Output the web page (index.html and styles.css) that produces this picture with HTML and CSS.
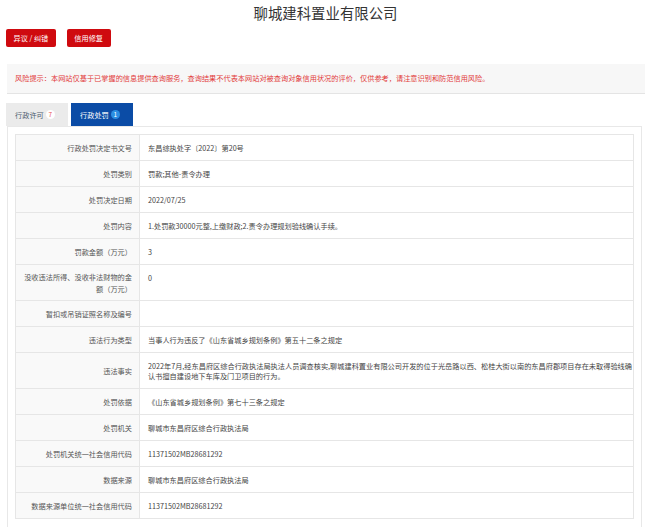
FILE: index.html
```html
<!DOCTYPE html>
<html lang="zh-CN">
<head>
<meta charset="utf-8">
<title>聊城建科置业有限公司</title>
<link rel="stylesheet" href="styles.css">
</head>
<body>
<div class="page">
  <h1 class="title">聊城建科置业有限公司</h1>
  <div class="actions">
    <a class="btn" href="#">异议 / 纠错</a>
    <a class="btn" href="#">信用修复</a>
  </div>
  <div class="risk">风险提示：本网站仅基于已掌握的信息提供查询服务，查询结果不代表本网站对被查询对象信用状况的评价，仅供参考，请注意识别和防范信用风险。</div>
  <div class="tabs">
    <div class="tab">行政许可<span class="badge badge-light">7</span></div>
    <div class="tab tab-active">行政处罚<span class="badge badge-blue">1</span></div>
  </div>
  <div class="panel">
    <table class="info">
      <tr><th>行政处罚决定书文号</th><td>东昌综执处字〔2022〕第20号</td></tr>
      <tr><th>处罚类别</th><td>罚款;其他-责令办理</td></tr>
      <tr><th>处罚决定日期</th><td>2022/07/25</td></tr>
      <tr><th>处罚内容</th><td>1.处罚款30000元整,上缴财政;2.责令办理规划验线确认手续。</td></tr>
      <tr><th>罚款金额（万元）</th><td>3</td></tr>
      <tr><th>没收违法所得、没收非法财物的金额（万元）</th><td>0</td></tr>
      <tr><th>暂扣或吊销证照名称及编号</th><td></td></tr>
      <tr><th>违法行为类型</th><td>当事人行为违反了《山东省城乡规划条例》第五十二条之规定</td></tr>
      <tr><th>违法事实</th><td>2022年7月,经东昌府区综合行政执法局执法人员调查核实,聊城建科置业有限公司开发的位于光岳路以西、松桂大街以南的东昌府郡项目存在未取得验线确认书擅自建设地下车库及门卫项目的行为。</td></tr>
      <tr><th>处罚依据</th><td>《山东省城乡规划条例》第七十三条之规定</td></tr>
      <tr><th>处罚机关</th><td>聊城市东昌府区综合行政执法局</td></tr>
      <tr><th>处罚机关统一社会信用代码</th><td>11371502MB28681292</td></tr>
      <tr><th>数据来源</th><td>聊城市东昌府区综合行政执法局</td></tr>
      <tr><th>数据来源单位统一社会信用代码</th><td>11371502MB28681292</td></tr>
    </table>
  </div>
</div>
</body>
</html>
```
FILE: styles.css
```css
html, body {
  margin: 0;
  padding: 0;
  background: #ffffff;
}
body {
  font-family: "Noto Sans CJK SC", "Noto Sans", "Liberation Sans", sans-serif;
  font-size: 7.2px;
  color: #333333;
}
.page {
  padding: 0 5px 0 6px;
}
.title {
  margin: 0;
  font-size: 14.4px;
  font-weight: normal;
  line-height: 26px;
  text-align: center;
  color: #333333;
}
.actions {
  display: flex;
  gap: 11px;
  margin-top: 3px;
}
.btn {
  display: flex;
  align-items: center;
  height: 18px;
  padding: 0 7.5px;
  background: #cf0a0f;
  color: #ffffff;
  border-radius: 2px;
  text-decoration: none;
  font-size: 7.2px;
}
.risk {
  margin: 17px 0 0 1px;
  height: 29px;
  line-height: 29px;
  padding-left: 8px;
  background: #f7f7f7;
  border-bottom: 1px solid #e4e4e4;
  color: #e23a3a;
  white-space: nowrap;
}
.tabs {
  display: flex;
  gap: 3px;
  margin-top: 9px;
}
.tab {
  width: 62px;
  height: 23px;
  display: flex;
  align-items: center;
  padding-left: 9px;
  box-sizing: border-box;
  background: #ebebeb;
  color: #4d5b6e;
}
.tab-active {
  background: #0b4ca6;
  color: #ffffff;
}
.badge {
  display: inline-flex;
  align-items: center;
  justify-content: center;
  width: 9px;
  height: 9px;
  margin-left: 2px;
  border-radius: 50%;
  font-size: 6.5px;
  line-height: 1;
}
.badge-light {
  background: #ffffff;
  color: #e8474a;
}
.badge-blue {
  background: #2b8fe3;
  color: #ffffff;
}
.panel {
  margin: 0 3px 0 1px;
  border: 1px solid #e8e8e8;
  padding: 7px 7px 8px 7px;
}
.info {
  width: 100%;
  border-collapse: collapse;
  border: 1px solid #e6e6e6;
  table-layout: fixed;
}
.info th, .info td {
  border: 1px solid #e6e6e6;
}
.info th {
  width: 108px;
  padding: 5.5px 7px 5.5px 8px;
  background: #f9f9f9;
  text-align: right;
  font-weight: normal;
  color: #555555;
  line-height: 12px;
  vertical-align: middle;
}
.info td {
  padding: 7.5px 0 7.5px 8px;
  line-height: 10px;
  color: #444444;
  height: 10px;
  vertical-align: top;
}
```
